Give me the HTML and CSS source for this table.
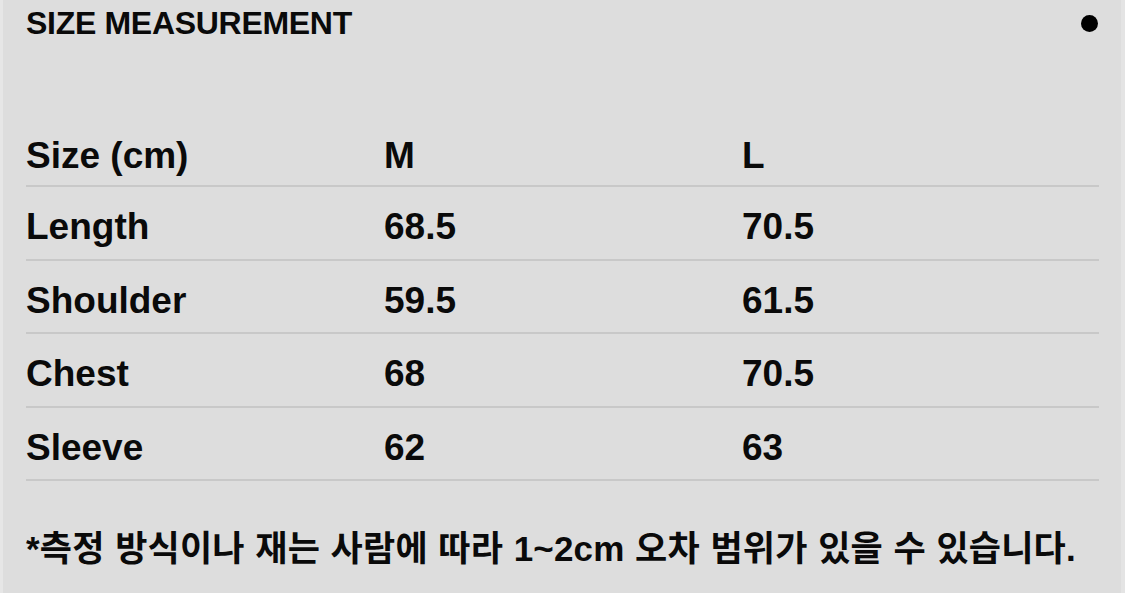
FILE: index.html
```html
<!DOCTYPE html>
<html lang="ko">
<head>
<meta charset="utf-8">
<link rel="stylesheet" href="styles.css">
</head>
<body>
<div class="panel">
  <div class="head">
    <h1 class="title">SIZE MEASUREMENT</h1>
    <span class="dot"></span>
  </div>
  <div class="table">
    <div class="row header">
      <div class="cell">Size (cm)</div><div class="cell">M</div><div class="cell">L</div>
    </div>
    <div class="row">
      <div class="cell">Length</div><div class="cell">68.5</div><div class="cell">70.5</div>
    </div>
    <div class="row">
      <div class="cell">Shoulder</div><div class="cell">59.5</div><div class="cell">61.5</div>
    </div>
    <div class="row">
      <div class="cell">Chest</div><div class="cell">68</div><div class="cell">70.5</div>
    </div>
    <div class="row">
      <div class="cell">Sleeve</div><div class="cell">62</div><div class="cell">63</div>
    </div>
  </div>
  <p class="note">*측정 방식이나 재는 사람에 따라 1~2cm 오차 범위가 있을 수 있습니다.</p>
</div>
</body>
</html>
```

FILE: styles.css
```css
html, body {
  margin: 0;
  padding: 0;
  background: #dddddd;
}
.panel {
  width: 1125px;
  height: 593px;
  box-sizing: border-box;
  background: #dddddd;
  border-left: 3px solid #e6e6e6;
  border-right: 4px solid #e4e4e4;
  padding: 0 22px 0 23px;
  font-family: "Liberation Sans", Arial, "Noto Sans CJK KR", sans-serif;
  font-weight: bold;
  color: #0a0a0a;
  overflow: hidden;
}
.head {
  display: flex;
  justify-content: space-between;
  align-items: center;
  height: 46px;
}
.title {
  margin: 0;
  font-size: 32px;
  font-weight: bold;
  letter-spacing: -0.3px;
  line-height: 46px;
}
.dot {
  width: 17px;
  height: 17px;
  border-radius: 50%;
  background: #000;
  margin-right: 1px;
}
.table {
  margin-top: 78px;
}
.row {
  display: grid;
  grid-template-columns: 358px 358px 1fr;
  height: 73.5px;
  box-sizing: border-box;
  border-bottom: 2px solid #c8c8c8;
  align-items: center;
}
.row.header {
  height: 63px;
}
.cell {
  font-size: 37px;
  line-height: 40px;
  padding-top: 9px;
}
.header .cell {
  padding-top: 2px;
}
.note {
  margin: 48px 0 0;
  font-family: "Liberation Sans", Arial, "Noto Sans CJK KR", sans-serif;
  font-size: 35px;
  line-height: 40px;
  letter-spacing: 0.2px;
  word-spacing: 0.6px;
  white-space: nowrap;
}
```
